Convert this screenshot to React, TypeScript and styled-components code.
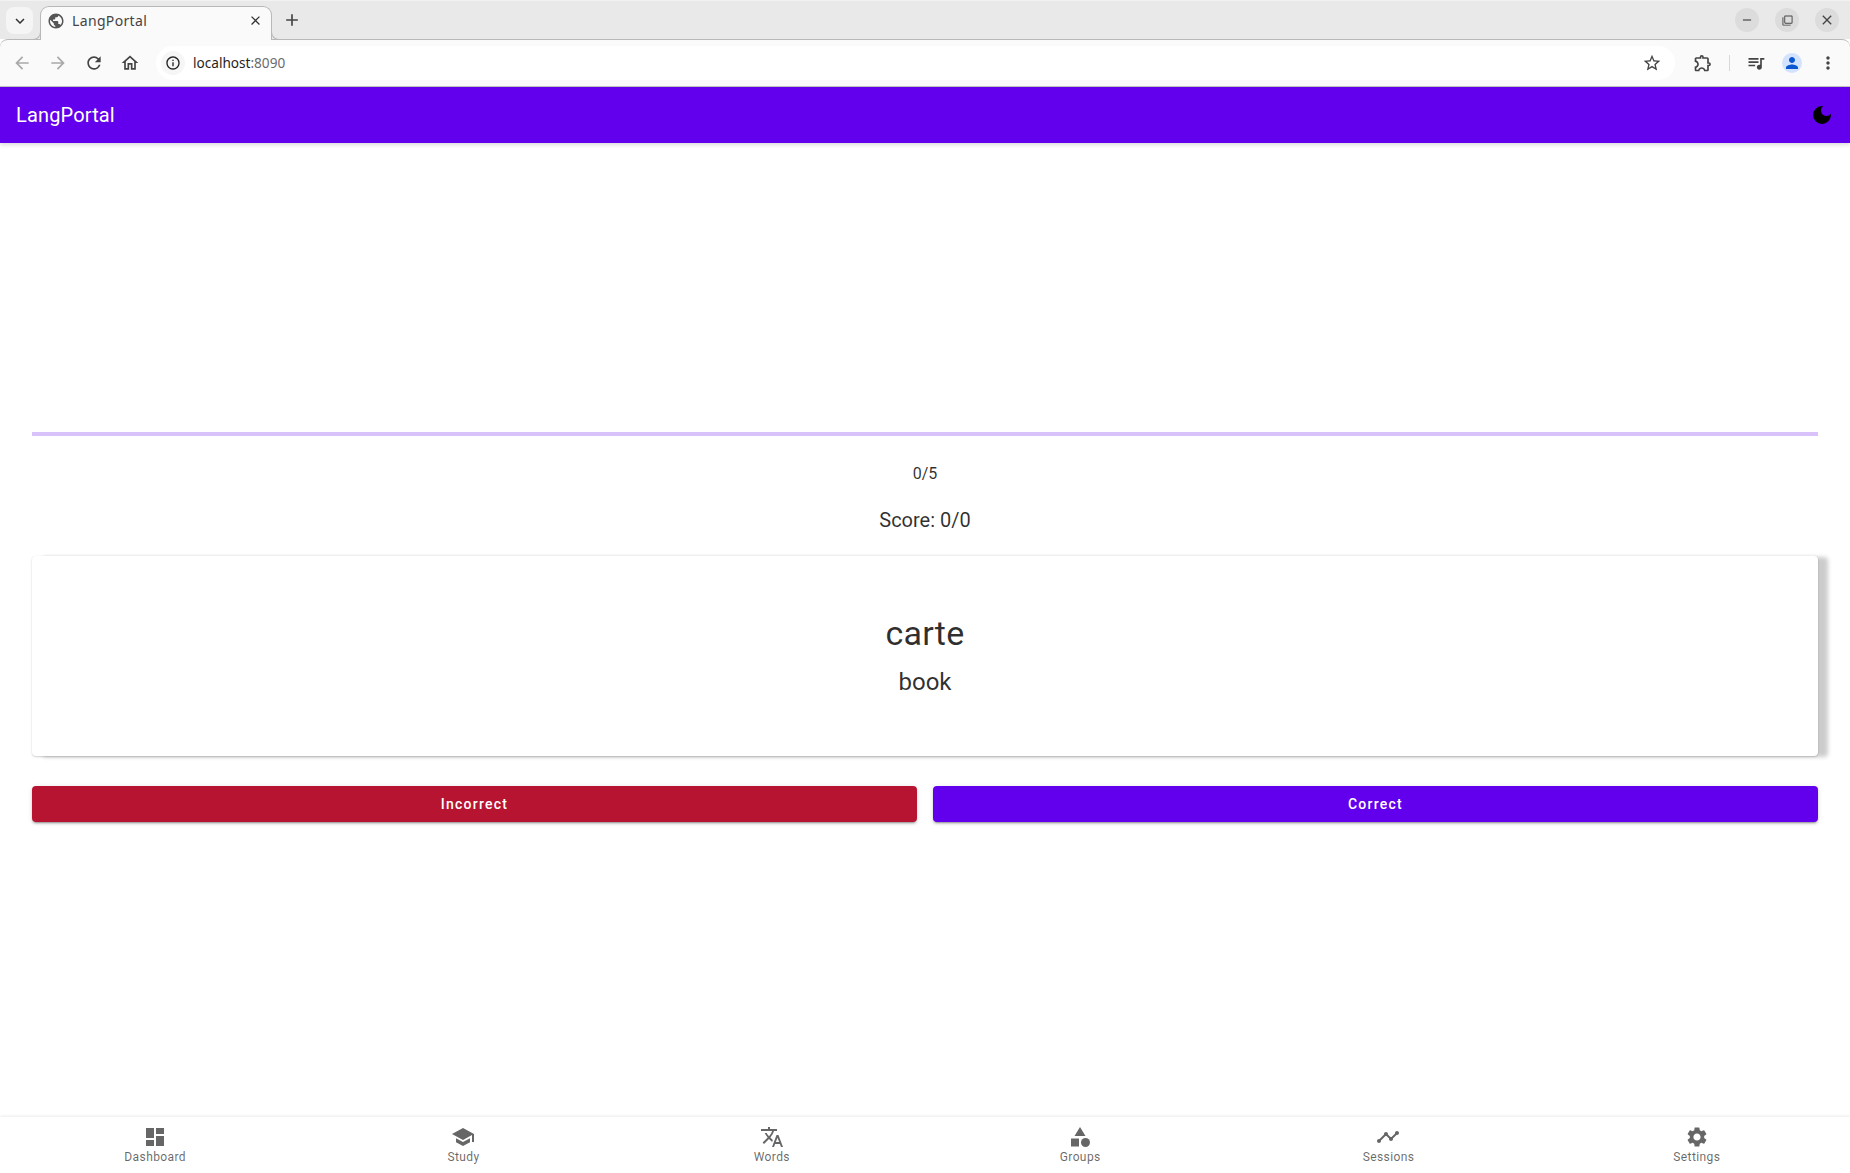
import React from 'react';
import styled, { createGlobalStyle } from 'styled-components';
import {
  MdDashboard, MdSchool, MdTranslate, MdCategory, MdTimeline, MdSettings,
  MdArrowBack, MdArrowForward, MdRefresh, MdOutlineHome, MdInfoOutline, MdStarBorder,
  MdOutlineExtension, MdQueueMusic, MdPerson, MdMoreVert, MdPublic, MdExpandMore,
  MdClose, MdAdd, MdRemove, MdFilterNone, MdDarkMode,
} from 'react-icons/md';

const GlobalStyle = createGlobalStyle`
  html, body {
    margin: 0;
    padding: 0;
    height: 100%;
    background: #fff;
    font-family: Roboto, "Liberation Sans", sans-serif;
  }
  #root { height: 100%; }
`;

const Page = styled.div`
  display: flex;
  flex-direction: column;
  width: 1850px;
  height: 1173px;
  overflow: hidden;
`;

// browser chrome
const TabStrip = styled.div`
  display: flex;
  align-items: flex-start;
  height: 39px;
  padding: 6px 6px 0;
  box-sizing: border-box;
  background: #e9e9e9;
  border-top: 1px solid #f2f2f2;
`;

const TabSearch = styled.div`
  width: 27px;
  height: 27px;
  margin-right: 7px;
  border-radius: 8px;
  background: #f5f5f5;
  color: #333;
  display: flex;
  align-items: center;
  justify-content: center;
  font-size: 18px;
`;

const Tab = styled.div`
  position: relative;
  z-index: 1;
  width: 232px;
  height: 34px;
  box-sizing: border-box;
  display: flex;
  align-items: center;
  padding: 0 8px 6px 6px;
  margin-top: -1px;
  background: #fafafa;
  border: 1px solid #b8b8b8;
  border-bottom: none;
  border-radius: 9px 9px 0 0;
  color: #444;
  font-family: "Noto Sans", sans-serif;
  font-size: 14px;
  letter-spacing: 0.35px;

  &::before, &::after {
    content: '';
    position: absolute;
    bottom: 0;
    width: 8px;
    height: 8px;
    border-bottom: 1px solid #b8b8b8;
  }
  &::before {
    left: -9px;
    border-right: 1px solid #b8b8b8;
    border-bottom-right-radius: 8px;
  }
  &::after {
    right: -9px;
    border-left: 1px solid #b8b8b8;
    border-bottom-left-radius: 8px;
  }
`;

const TabTitle = styled.span`
  flex: 1;
  margin-left: 7px;
`;

const NewTab = styled.div`
  margin: 3px 0 0 10px;
  color: #444;
  font-size: 20px;
  display: flex;
`;

const WindowButtons = styled.div`
  margin-left: auto;
  display: flex;
  gap: 16px;
  margin-right: 5px;
  margin-top: 1px;
`;

const WindowButton = styled.div`
  width: 24px;
  height: 24px;
  border-radius: 50%;
  background: #dcdcdc;
  color: #444;
  display: flex;
  align-items: center;
  justify-content: center;
`;

const Toolbar = styled.div`
  height: 48px;
  box-sizing: border-box;
  display: flex;
  align-items: center;
  background: #fafafa;
  border-top: 1px solid #b8b8b8;
  border-bottom: 1px solid #c4c4c4;
  border-radius: 8px 8px 0 0;
  padding-left: 12px;
`;

const ToolIcon = styled.div<{ $dim?: boolean; $gap?: number; $lead?: number }>`
  width: 20px;
  height: 20px;
  margin-left: ${({ $lead }) => $lead ?? 0}px;
  margin-right: ${({ $gap }) => $gap ?? 16}px;
  display: flex;
  align-items: center;
  justify-content: center;
  color: ${({ $dim }) => ($dim ? '#a9a9a9' : '#444')};
  font-size: 20px;
  flex: none;
`;

const AddressBar = styled.div`
  width: 1519px;
  height: 34px;
  box-sizing: border-box;
  flex: none;
  display: flex;
  align-items: center;
  padding: 0 0 0 5px;
  border-radius: 17px;
  background: #fff;
  font-family: "Noto Sans", sans-serif;
  font-size: 13.6px;
  color: #1f1f1f;
`;

const SiteInfo = styled.div`
  width: 24px;
  height: 24px;
  border-radius: 50%;
  background: #f6f6f6;
  display: flex;
  align-items: center;
  justify-content: center;
  font-size: 16px;
  color: #222;
  margin-right: 8px;
`;

const AddressText = styled.span`
  padding-bottom: 2px;
`;

const Port = styled.span`
  color: #6b6b6b;
`;

const StarSlot = styled.div`
  margin-left: auto;
  margin-right: 13px;
  color: #444;
  font-size: 20px;
  display: flex;
`;

const Divider = styled.div`
  width: 1px;
  height: 16px;
  background: #d8d8d8;
  margin-right: 16px;
  flex: none;
`;

const Avatar = styled.div`
  width: 20px;
  height: 20px;
  border-radius: 50%;
  background: #d3e3fd;
  color: #0b57d0;
  display: flex;
  align-items: center;
  justify-content: center;
  font-size: 18px;
  margin-right: 16px;
  flex: none;
`;

// app
const AppBar = styled.header`
  position: relative;
  z-index: 2;
  flex: none;
  height: 56px;
  display: flex;
  align-items: center;
  justify-content: space-between;
  padding: 0 16px;
  background: #6200ee;
  color: #fff;
  font-size: 20px;
  font-weight: 400;
  letter-spacing: 0.15px;
  box-shadow: 0 2px 4px rgba(0, 0, 0, 0.14);
`;

const Main = styled.main`
  flex: 1;
  display: flex;
  flex-direction: column;
  padding: 289px 32px 0;
`;

const Progress = styled.div`
  height: 4px;
  background: #d9c2fa;
  margin-bottom: 26px;
`;

const Counter = styled.div`
  font-size: 16px;
  line-height: 24px;
  text-align: center;
  color: rgba(0, 0, 0, 0.82);
  margin-bottom: 18px;
`;

const Score = styled.div`
  font-size: 20px;
  line-height: 32px;
  text-align: center;
  color: rgba(0, 0, 0, 0.82);
  margin-bottom: 20px;
`;

const Card = styled.section`
  height: 200px;
  box-sizing: border-box;
  border-radius: 4px;
  background: #fff;
  padding-top: 56px;
  text-align: center;
  color: rgba(0, 0, 0, 0.82);
  box-shadow: 0 1px 2px rgba(0, 0, 0, 0.18), 0 0 1px rgba(0, 0, 0, 0.08), 10px 1px 4px rgba(0, 0, 0, 0.2);
  margin-bottom: 30px;
`;

const Word = styled.div`
  font-size: 34px;
  line-height: 42px;
  letter-spacing: 0.25px;
`;

const Translation = styled.div`
  font-size: 24px;
  line-height: 36px;
  margin-top: 10px;
`;

const Actions = styled.div`
  display: grid;
  grid-template-columns: 1fr 1fr;
  gap: 16px;
`;

const ActionButton = styled.button<{ $color: string }>`
  height: 36px;
  border: none;
  border-radius: 4px;
  background: ${({ $color }) => $color};
  color: #fff;
  font-family: Roboto, sans-serif;
  font-size: 14px;
  font-weight: 500;
  letter-spacing: 1.25px;
  box-shadow: 0 3px 1px -2px rgba(0, 0, 0, 0.2), 0 2px 2px 0 rgba(0, 0, 0, 0.14), 0 1px 5px 0 rgba(0, 0, 0, 0.12);
`;

const BottomNav = styled.nav`
  flex: none;
  height: 56px;
  display: grid;
  grid-template-columns: repeat(6, 1fr);
  background: #fff;
  box-shadow: 0 -1px 3px rgba(0, 0, 0, 0.08);
`;

const NavItem = styled.div`
  display: flex;
  flex-direction: column;
  align-items: center;
  padding: 8px 0 0 2px;
  color: rgba(0, 0, 0, 0.6);
  font-size: 24px;
`;

const NavLabel = styled.span`
  font-size: 12px;
  line-height: 16px;
  letter-spacing: 0.4px;
`;

const NAV = [
  { label: 'Dashboard', Icon: MdDashboard },
  { label: 'Study', Icon: MdSchool },
  { label: 'Words', Icon: MdTranslate },
  { label: 'Groups', Icon: MdCategory },
  { label: 'Sessions', Icon: MdTimeline },
  { label: 'Settings', Icon: MdSettings },
];

export default function App() {
  return (
    <Page>
      <GlobalStyle />
      <TabStrip>
        <TabSearch><MdExpandMore /></TabSearch>
        <Tab>
          <MdPublic size={18} color="#555" />
          <TabTitle>LangPortal</TabTitle>
          <MdClose size={15} color="#333" />
        </Tab>
        <NewTab><MdAdd /></NewTab>
        <WindowButtons>
          <WindowButton><MdRemove size={14} /></WindowButton>
          <WindowButton><MdFilterNone size={11} /></WindowButton>
          <WindowButton><MdClose size={16} /></WindowButton>
        </WindowButtons>
      </TabStrip>
      <Toolbar>
        <ToolIcon $dim><MdArrowBack /></ToolIcon>
        <ToolIcon $dim><MdArrowForward /></ToolIcon>
        <ToolIcon><MdRefresh /></ToolIcon>
        <ToolIcon><MdOutlineHome /></ToolIcon>
        <AddressBar>
          <SiteInfo><MdInfoOutline /></SiteInfo>
          <AddressText>localhost<Port>:8090</Port></AddressText>
          <StarSlot><MdStarBorder /></StarSlot>
        </AddressBar>
        <ToolIcon $lead={18}><MdOutlineExtension /></ToolIcon>
        <Divider />
        <ToolIcon $gap={16}><MdQueueMusic /></ToolIcon>
        <Avatar><MdPerson /></Avatar>
        <ToolIcon $gap={0}><MdMoreVert /></ToolIcon>
      </Toolbar>
      <AppBar>
        LangPortal
        <MdDarkMode size={24} color="#000" />
      </AppBar>
      <Main>
        <Progress />
        <Counter>0/5</Counter>
        <Score>Score: 0/0</Score>
        <Card>
          <Word>carte</Word>
          <Translation>book</Translation>
        </Card>
        <Actions>
          <ActionButton $color="#b71431">Incorrect</ActionButton>
          <ActionButton $color="#6200ee">Correct</ActionButton>
        </Actions>
      </Main>
      <BottomNav>
        {NAV.map(({ label, Icon }) => (
          <NavItem key={label}>
            <Icon />
            <NavLabel>{label}</NavLabel>
          </NavItem>
        ))}
      </BottomNav>
    </Page>
  );
}
